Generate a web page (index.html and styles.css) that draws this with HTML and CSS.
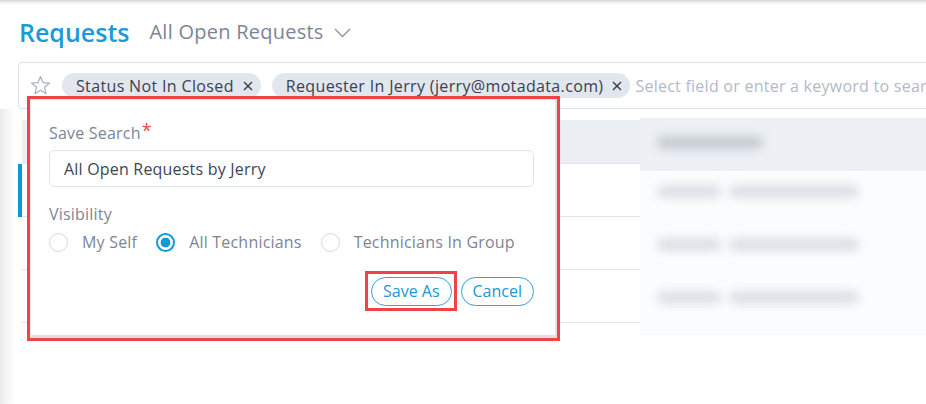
FILE: index.html
```html
<!DOCTYPE html>
<html lang="en">
<head>
<meta charset="utf-8">
<title>Requests</title>
<link rel="stylesheet" href="styles.css">
</head>
<body>
<div class="topshade"></div>
<header class="head">
  <h1 class="title">Requests</h1>
  <div class="view">All Open Requests
    <svg class="chev" viewBox="0 0 17 10" width="17" height="10"><polyline points="1,1 8.5,8.5 16,1" fill="none" stroke="#8a93a3" stroke-width="1.3"/></svg>
  </div>
</header>
<div class="search">
  <svg class="star" viewBox="0 0 21 21" width="21" height="21"><polygon points="10.5,1.5 12.97,7.6 19.53,8.06 14.49,12.3 16.08,18.69 10.5,15.2 4.92,18.69 6.51,12.3 1.47,8.06 8.03,7.6" fill="none" stroke="#a9b1be" stroke-width="1.2" stroke-linejoin="round"/></svg>
  <span class="chip">Status Not In Closed
    <svg class="x" viewBox="0 0 10 10" width="10" height="10"><path d="M1 1L9 9M9 1L1 9" stroke="#3a4153" stroke-width="1.5"/></svg>
  </span>
  <span class="chip">Requester In Jerry (jerry@motadata.com)
    <svg class="x" viewBox="0 0 10 10" width="10" height="10"><path d="M1 1L9 9M9 1L1 9" stroke="#3a4153" stroke-width="1.5"/></svg>
  </span>
  <span class="ph">Select field or enter a keyword to search</span>
</div>
<main class="area">
  <div class="grid">
    <div class="ghead"></div>
    <div class="grow sel"></div>
    <div class="grow"></div>
    <div class="grow"></div>
  </div>
  <div class="blur">
    <div class="bhead"><i class="b b1"></i></div>
    <div class="brow"><i class="b b2"></i><i class="b b3"></i></div>
    <div class="brow"><i class="b b2"></i><i class="b b3"></i></div>
    <div class="brow"><i class="b b2"></i><i class="b b3"></i></div>
  </div>
</main>
<div class="annot">
  <div class="popup">
    <div class="lbl">Save Search<span class="req">*</span></div>
    <div class="input">All Open Requests by Jerry</div>
    <div class="lbl vis">Visibility</div>
    <div class="radios">
      <span class="radio"><span class="dot"></span>My Self</span>
      <span class="radio on"><span class="dot"></span>All Technicians</span>
      <span class="radio"><span class="dot"></span>Technicians In Group</span>
    </div>
    <div class="actions">
      <span class="mark"><button class="btn save">Save As</button></span>
      <button class="btn cancel">Cancel</button>
    </div>
  </div>
</div>
</body>
</html>
```

FILE: styles.css
```css
* { box-sizing: border-box; }
html, body { margin: 0; }
body {
  width: 926px;
  height: 404px;
  overflow: hidden;
  background: #fff;
  font-family: "Open Sans", "Noto Sans", sans-serif;
  letter-spacing: 0.25px;
  color: #3b4253;
  display: flex;
  flex-direction: column;
  position: relative;
}
.topshade {
  flex: none;
  height: 5px;
  background: linear-gradient(#d4d5d7, #eeeff0 50%, #fff);
}
.head {
  flex: none;
  height: 57px;
  display: flex;
  align-items: center;
  padding: 0 0 4px 19px;
  gap: 20px;
}
.title {
  margin: 0;
  font-size: 25px;
  font-weight: 600;
  color: #1a9bd8;
  letter-spacing: 0;
}
.view {
  font-size: 20px;
  color: #7c8597;
  display: flex;
  align-items: center;
  gap: 10px;
}
.chev { margin-top: 3px; }
.search {
  flex: none;
  height: 47px;
  margin: 0 -30px 0 18px;
  border: 1px solid #dde1e8;
  border-radius: 4px;
  display: flex;
  align-items: center;
  padding-left: 11px;
  gap: 11px;
  white-space: nowrap;
  overflow: hidden;
}
.star { flex: none; }
.chip {
  flex: none;
  height: 25px;
  border-radius: 13px;
  background: #e2e6ed;
  display: inline-flex;
  align-items: center;
  padding: 0 8px 0 14px;
  gap: 9px;
  font-size: 16px;
  letter-spacing: 0.35px;
  color: #3a4153;
}
.ph {
  font-size: 16px;
  color: #b3bac7;
  margin-left: -6px;
}
.area {
  flex: 1;
  display: flex;
  align-items: flex-start;
  padding: 9px 0 0 18px;
  background: linear-gradient(to right, #e9e9e9, #f6f6f6 7px, #fff 16px);
}
.grid {
  width: 622px;
  padding-left: 4px;
  background: #fff;
}
.ghead {
  height: 44px;
  margin-top: 2px;
  background: #ebeef3;
  border-bottom: 1px solid #e1e5eb;
}
.grow {
  height: 53px;
  border-bottom: 1px solid #e1e5eb;
}
.grow.sel { box-shadow: -4px 0 0 #0a9ad8; }
.blur {
  flex: 1;
  height: 217px;
  background: #fbfcfd;
  overflow: hidden;
}
.bhead {
  height: 53px;
  background: #edf0f4;
  padding: 18px 0 0 17px;
}
.b {
  display: block;
  height: 13px;
  border-radius: 6px;
  background: #c6cbd4;
  filter: blur(5px);
}
.b1 { width: 106px; }
.brow {
  height: 53px;
  display: flex;
  gap: 8px;
  padding: 14px 0 0 17px;
}
.brow .b { background: #dcdfe6; }
.b2 { width: 64px; }
.b3 { width: 130px; }
.annot {
  position: absolute;
  left: 27px;
  top: 96px;
  width: 533px;
  height: 245px;
  border: 3px solid #ef4347;
  letter-spacing: 0.2px;
}
.popup {
  height: 100%;
  background: #fff;
  border: 1px solid #e4e7eb;
  border-right: 2px solid #e1e3e6;
  border-bottom: 3px solid #e0e0e0;
  padding: 22px 21px 0 18px;
  display: flex;
  flex-direction: column;
}
.lbl {
  font-size: 16px;
  line-height: 22px;
  color: #7c8597;
}
.req {
  color: #f0484b;
  font-size: 18px;
  vertical-align: top;
  line-height: 16px;
  margin-left: 1px;
}
.input {
  margin-top: 6px;
  height: 37px;
  border: 1px solid #dfe3ea;
  border-radius: 5px;
  padding-left: 14px;
  display: flex;
  align-items: center;
  font-size: 16px;
  color: #3e4555;
}
.vis { margin-top: 16px; }
.radios {
  margin-top: 6px;
  height: 22px;
  display: flex;
  align-items: center;
}
.radio {
  display: flex;
  align-items: center;
  gap: 14px;
  margin-right: 19px;
  font-size: 16px;
  color: #7c8597;
}
.dot {
  flex: none;
  width: 19px;
  height: 19px;
  border-radius: 50%;
  border: 1px solid #d5d9e0;
}
.radio.on .dot {
  border: 2px solid #0f9ad9;
  background: radial-gradient(circle, #0f9ad9 0 4.6px, #fff 5.2px);
}
.actions {
  margin-top: 18px;
  display: flex;
  justify-content: flex-end;
  align-items: center;
  gap: 4px;
}
.mark {
  display: flex;
  border: 3px solid #ef4347;
  padding: 3px 2px 2px 3px;
}
.btn {
  height: 29px;
  border: 1px solid #33a2dc;
  border-radius: 15px;
  background: #fff;
  color: #2196d4;
  font-family: inherit;
  font-size: 16px;
  letter-spacing: 0;
  line-height: 27px;
  padding: 0 12px;
}
.save { padding: 0 11px; }
.cancel { padding: 0 11px; }
```
